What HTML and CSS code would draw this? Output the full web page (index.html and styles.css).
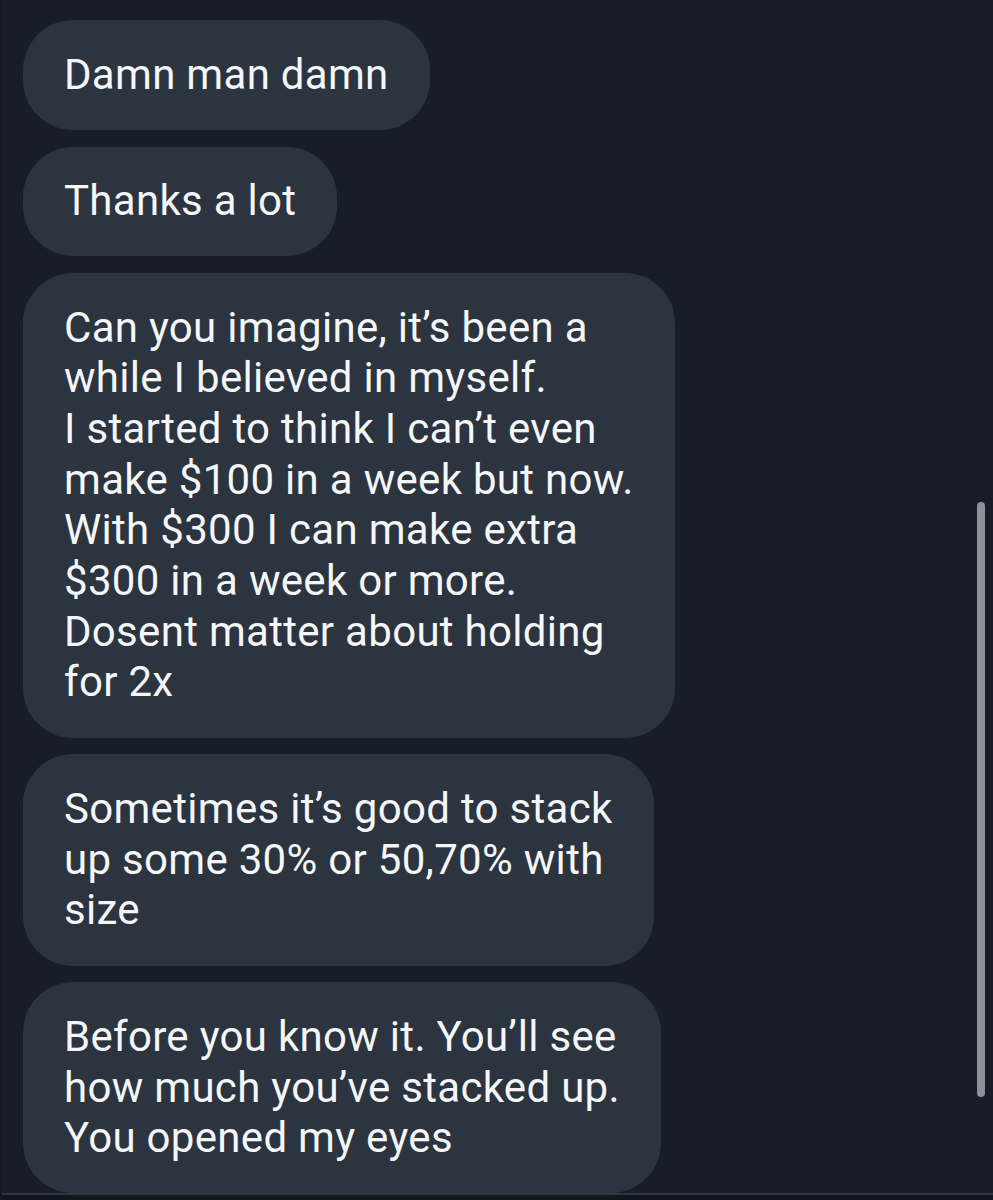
FILE: index.html
```html
<!DOCTYPE html>
<html lang="en">
<head>
<meta charset="utf-8">
<title>Messages</title>
<link rel="stylesheet" href="styles.css">
</head>
<body>
<div class="screen">
  <div class="thread">
    <div class="bubble">Damn man damn</div>
    <div class="bubble">Thanks a lot</div>
    <div class="bubble">Can you imagine, it’s been a<br>while I believed in myself.<br>I started to think I can’t even<br>make $100 in a week but now.<br>With $300 I can make extra<br>$300 in a week or more.<br>Dosent matter about holding<br>for 2x</div>
    <div class="bubble">Sometimes it’s good to stack<br>up some 30% or 50,70% with<br>size</div>
    <div class="bubble">Before you know it. You’ll see<br>how much you’ve stacked up.<br>You opened my eyes</div>
  </div>
  <div class="scrollbar"></div>
  <div class="bottom-bar"></div>
</div>
</body>
</html>
```

FILE: styles.css
```css
html, body {
  margin: 0;
  padding: 0;
  background: #171e28;
}
.screen {
  position: relative;
  width: 993px;
  height: 1200px;
  overflow: hidden;
  background: #171e28;
  border-left: 2px solid #131921;
  box-sizing: border-box;
  display: flex;
  flex-direction: column;
}
.thread {
  flex: 1;
  display: flex;
  flex-direction: column;
  align-items: flex-start;
  gap: 16.8px;
  padding: 20px 0 0 21px;
  overflow: hidden;
}
.bubble {
  background: #2b343f;
  color: #f4f6f8;
  font-family: Roboto, "Noto Sans", sans-serif;
  font-size: 42px;
  line-height: 50.7px;
  padding: 29.5px 41px 29.5px 41px;
  border-radius: 50px;
  white-space: nowrap;
  letter-spacing: 0.3px;
}
.scrollbar {
  position: absolute;
  left: 975px;
  top: 502px;
  width: 8px;
  height: 595px;
  border-radius: 4px;
  background: #8a9199;
}
.bottom-bar {
  height: 5px;
  border-top: 2px solid #2f3640;
  background: #12171e;
  flex: none;
}
```
